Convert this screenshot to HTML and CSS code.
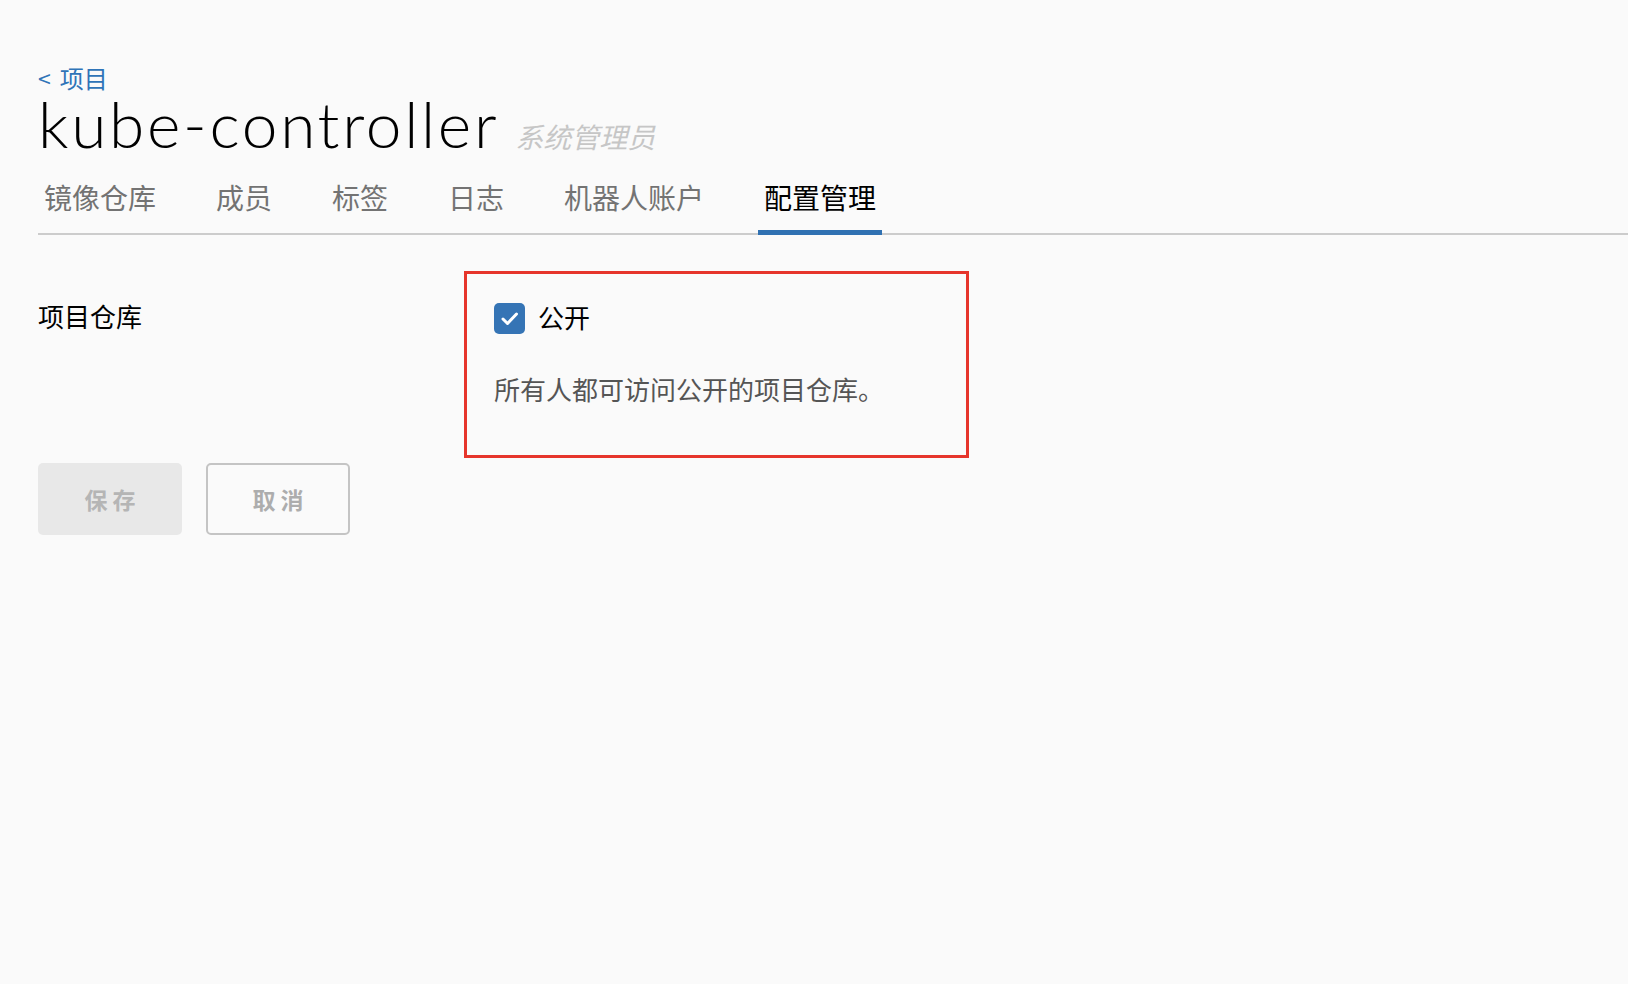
FILE: index.html
```html
<!DOCTYPE html>
<html lang="zh-CN">
<head>
<meta charset="utf-8">
<title>kube-controller</title>
<link rel="stylesheet" href="styles.css">
</head>
<body>
<div class="page">
  <a class="back" href="#"><span class="back-arrow">&lt;</span>项目</a>
  <div class="title-row">
    <h1 class="title">kube-controller</h1>
    <span class="role">系统管理员</span>
  </div>
  <nav class="tabs">
    <span class="tab">镜像仓库</span>
    <span class="tab">成员</span>
    <span class="tab">标签</span>
    <span class="tab">日志</span>
    <span class="tab">机器人账户</span>
    <span class="tab active">配置管理</span>
  </nav>
  <div class="form-row">
    <div class="form-label">项目仓库</div>
    <div class="highlight">
      <label class="check">
        <span class="checkbox">
          <svg width="31" height="31" viewBox="0 0 31 31"><rect x="0" y="0" width="31" height="31" rx="5" fill="#3574b5"/><polyline points="9,16 13.5,20.5 22.5,11" fill="none" stroke="#ffffff" stroke-width="3" stroke-linecap="round" stroke-linejoin="round"/></svg>
        </span>
        <span class="check-text">公开</span>
      </label>
      <p class="desc">所有人都可访问公开的项目仓库。</p>
    </div>
  </div>
  <div class="buttons">
    <button class="btn btn-save">保存</button>
    <button class="btn btn-cancel">取消</button>
  </div>
</div>
</body>
</html>
```
FILE: styles.css
```css
html, body {
  margin: 0;
  padding: 0;
  background: #fafafa;
}
body {
  font-family: "Noto Sans CJK SC", "Noto Sans", sans-serif;
  color: #000;
}
.page {
  padding: 65px 0 0 38px;
}
.back {
  display: flex;
  align-items: center;
  gap: 9px;
  font-size: 24px;
  line-height: 24px;
  color: #2f74b8;
  text-decoration: none;
  height: 26px;
}
.back-arrow {
  font-size: 23px;
}
.title-row {
  display: flex;
  align-items: baseline;
  height: 79px;
}
.title {
  margin: 0;
  font-family: Lato, "Noto Sans", sans-serif;
  font-weight: 300;
  font-size: 64px;
  line-height: 66px;
  letter-spacing: 2.7px;
  color: #000;
}
.role {
  margin-left: 16px;
  font-size: 28px;
  font-style: italic;
  color: #c6c6c6;
}
.tabs {
  display: flex;
  gap: 48px;
  border-bottom: 2px solid #cccccc;
}
.tab {
  padding: 13px 6px 22px;
  font-size: 28px;
  line-height: 28px;
  color: #737373;
  margin-bottom: -2px;
  border-bottom: 2px solid transparent;
}
.tab.active {
  color: #000;
  border-bottom: 5px solid #3071b2;
  padding-bottom: 19px;
}
.form-row {
  display: flex;
  margin-top: 36px;
}
.form-label {
  width: 426px;
  margin-top: 32px;
  font-size: 26px;
  line-height: 26px;
  color: #000;
}
.highlight {
  width: 472px;
  border: 3px solid #e6352b;
  padding: 29px 0 53px 27px;
}
.check {
  display: flex;
  align-items: center;
  gap: 13px;
  height: 31px;
}
.checkbox {
  display: block;
  width: 31px;
  height: 31px;
}
.checkbox svg {
  display: block;
}
.check-text {
  font-size: 26px;
  line-height: 26px;
  margin-bottom: 4px;
}
.desc {
  margin: 42px 0 0;
  font-size: 26px;
  line-height: 26px;
  color: #555555;
}
.buttons {
  display: flex;
  gap: 24px;
  margin-top: 5px;
}
.btn {
  width: 144px;
  height: 72px;
  border-radius: 5px;
  font-family: "Noto Sans CJK SC", sans-serif;
  font-size: 23px;
  font-weight: 600;
  letter-spacing: 5px;
  padding: 0 0 0 5px;
}
.btn-save {
  background: #e8e8e8;
  border: 0;
  color: #b5b5b5;
}
.btn-cancel {
  background: transparent;
  border: 2px solid #c4c4c4;
  color: #adadad;
}
```
